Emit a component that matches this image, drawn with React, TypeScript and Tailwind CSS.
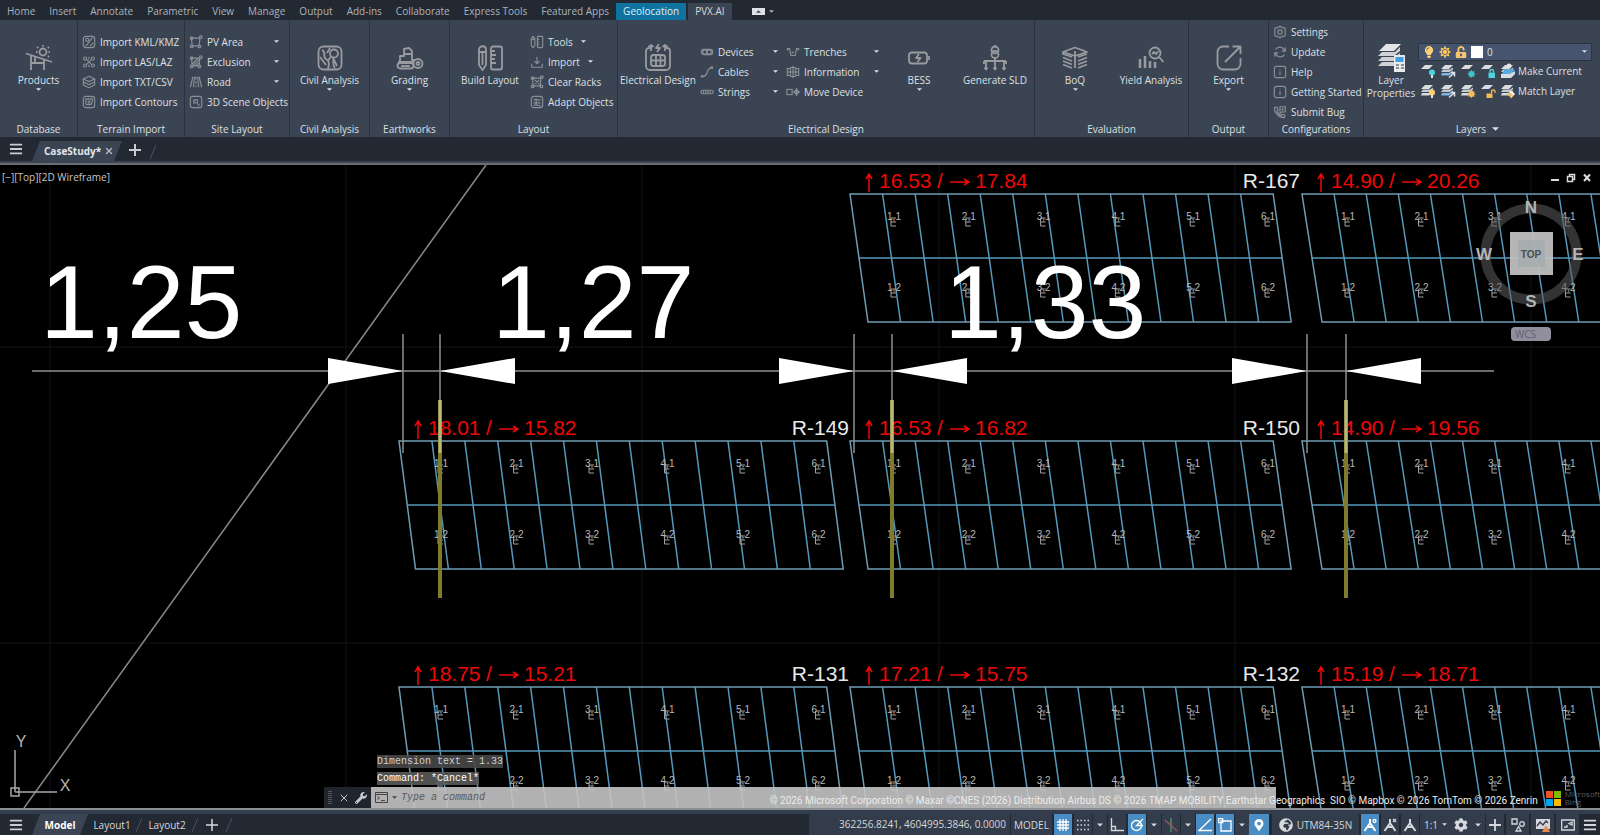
import React from 'react';
import { FaBars, FaCog, FaGlobeAfrica, FaLightbulb, FaMapMarkerAlt, FaSun, FaUnlockAlt, FaWrench } from 'react-icons/fa';
import { FiX } from 'react-icons/fi';

/* ---------- data ---------- */

const menuTabs = [
  'Home', 'Insert', 'Annotate', 'Parametric', 'View', 'Manage', 'Output', 'Add-ins',
  'Collaborate', 'Express Tools', 'Featured Apps', 'Geolocation', 'PVX.AI',
];

// small line icons, 16 x 16
const smallIcons: Record<string, React.ReactNode> = {
  kml: <><rect x="1.5" y="1.5" width="13" height="13" rx="3" /><path d="M4 13 12 3M9 13l4-4" /><circle cx="6" cy="5.500" r="1.800" /></>,
  las: <><circle cx="3.500" cy="4" r="1.700" /><circle cx="12.500" cy="4" r="1.700" /><circle cx="3.500" cy="12" r="1.700" /><circle cx="12.500" cy="12" r="1.700" /><path d="M5 5l6 6M11 5l-6 6M8 2v3M8 11v3" /></>,
  txt: <><path d="M8 1.500 14.500 4.500 8 7.500 1.500 4.500z" /><path d="M1.500 4.500v7L8 14.500l6.500-3v-7M1.500 8 8 11l6.500-3" /></>,
  contours: <><rect x="1.500" y="1.500" width="13" height="13" rx="3" /><path d="M5 4.500h6c1.500 0 1.500 2 .5 3s.5 3.500-2 3.500H6c-2 0-2-2-1.500-3.500S3.500 4.500 5 4.500z" /><path d="M6.500 7h3M6.500 9h3" /></>,
  area: <><path d="M3 3.500h9.500l-1 9H3.500z" /><circle cx="3" cy="3.500" r="1.500" /><circle cx="13.500" cy="2.500" r="1.500" /><circle cx="3" cy="13" r="1.500" /><circle cx="12" cy="13" r="1.500" /></>,
  exclusion: <><path d="M3 3.500h9.500l-1 9H3.500zM4 10l6-6M5 12l7-7M8 12l3-3" /><circle cx="3" cy="3.500" r="1.500" /><circle cx="13.500" cy="2.500" r="1.500" /><circle cx="3" cy="13" r="1.500" /><circle cx="12" cy="13" r="1.500" /></>,
  road: <path d="M4.500 2 1.500 14M11.500 2l3 12M6.500 2 5 14M8 2v3M8 7v3M8 12v2M10 2l1 12" />,
  scene: <><rect x="1.500" y="1.500" width="13" height="13" rx="2.500" /><path d="M5.500 5.500h4v4M5.500 5.500v3.500h3M9.500 9.500l2.500 3" /></>,
  tools: <><path d="M1.500 4 3.500 1.500 5.500 4v8l-2 2.500-2-2.500zM1.500 5h4" /><rect x="8.500" y="1.500" width="6" height="13" rx="1" /><path d="M8.500 5h2M8.500 8h2M8.500 11h2" /></>,
  import: <path d="M8 2v8M5 7l3 3 3-3M2 10v4h12v-4" />,
  clear: <><path d="M3 3.500h9.500l-1 9H3.500zM5.500 5.500l5 5M10.500 5.500l-5 5" /><circle cx="3" cy="3.500" r="1.500" /><circle cx="13.500" cy="2.500" r="1.500" /><circle cx="3" cy="13" r="1.500" /><circle cx="13" cy="13" r="1.500" /></>,
  adapt: <><rect x="1.500" y="1.500" width="13" height="13" rx="3" /><path d="M4 6c2-3 6 2 8-1M4 9h8M4 12c2-2 6 1 8 0M7 4v8" /></>,
  devices: <><rect x="1.500" y="5" width="13" height="6" rx="3" /><circle cx="5.500" cy="8" r="2.500" /><circle cx="10.500" cy="8" r="2.500" /></>,
  cables: <><path d="M3 13c7 1 3-9 10-10" /><circle cx="2.500" cy="13" r="1" /><circle cx="13.500" cy="3" r="1" /></>,
  strings: <><rect x="1" y="6" width="14" height="4" rx="2" /><path d="M4 6.500v3M6.500 6.500v3M9 6.500v3M11.500 6.500v3" /></>,
  trenches: <path d="M1 4h3l1.500 8h5L12 4h3M6.500 9.500 9 7.500M1 6l2-1M13 6l2-1" />,
  information: <path d="M8 2v12M8 2 4 4H1.500v8H4l4 2M8 2l4 2h2.500v8H12l-4 2M1.500 8h13M5 4v8M11 4v8" />,
  move: <><rect x="1" y="5" width="6" height="6" /><path d="M12 5l3 3-3 3-3-3zM12 3.500v9M8 8h8" /></>,
  settings: <><path d="M8 1.200 10.500 3l3.200.5L14 8l-.3 4.500-3.200.5L8 14.800 5.500 13l-3.200-.5L2 8l.3-4.500L5.500 3z" /><circle cx="8" cy="8" r="2.500" /></>,
  update: <path d="M13.500 7A5.800 5.800 0 0 0 3 5M2.500 9A5.800 5.800 0 0 0 13 11M14 2.500V7h-4M2 13.500V9h4" />,
  info: <><rect x="1.500" y="1.500" width="13" height="13" rx="2.500" /><path d="M8 7v4.500M8 4.500v1" /></>,
  bug: <><path d="M1.500 3c0 6 5 11.500 11.500 11.500l.5-3-3-1-1 1.500C7 11 5 9 4.500 7L6 6 4.500 2.500z" /><path d="M8 2h6v6H9.500L8 9.500zM10 4.500h2M10 6.500l2-2" /></>,
};

// large ribbon icons, 28 x 28
const bigIcons: Record<string, React.ReactNode> = {
  products: <><path d="M1 9.500 27 18M6 12v14M6 19h13M19 16v10M10 13v6" /><circle cx="18" cy="8" r="3.500" /><path d="M18 1v1.500M12 3l1.200 1.200M24 3l-1.200 1.200M11 8h1.500M23.500 8H25M23 12l1 1" /></>,
  civil: <><rect x="2.500" y="2.500" width="23" height="23" rx="5" /><path d="M6 6c5 2 0 7 4 9s3 6 2 10M4 13l6 8M14 4l-3 5M17 14l4 8M17 14c1 4-1 7 2 10" /><circle cx="18" cy="9.500" r="4" /><path d="m15 12.500-3 4" /></>,
  grading: <><path d="M4 18V12h4V5l5-1 3 3v9h3M8 10h7M2 18h15" /><rect x="1.500" y="19" width="16" height="5.500" rx="2.700" /><circle cx="22" cy="19.500" r="4.500" /><circle cx="22" cy="19.500" r="1.500" /><path d="M5 22h9" /></>,
  build: <><path d="M3 6c0-5 7-5 7 0v15l-3.500 5L3 21zM3 8h7M6.500 8v13" /><rect x="15" y="2.500" width="11" height="23" rx="2" /><path d="M15 7h4M15 11h5M15 15h4M15 19h5" /></>,
  electrical: <><path d="M6 4H5a3 3 0 0 0-3 3v15a4 4 0 0 0 4 4h16a4 4 0 0 0 4-4V7a3 3 0 0 0-3-3h-1M7 1v6M21 1v6M4.500 3 7 1l2.500 2M18.500 3 21 1l2.500 2" /><path d="m15 0-3 4h4l-3 4" /><rect x="7" y="11" width="14" height="11" rx="2.500" /><path d="M7 16.500h14M12 11v11M16.500 11v11" /></>,
  bess: <><rect x="4" y="8.500" width="18" height="11" rx="3" /><path d="M24 12v4M14 10l-3 4h4.500l-3 4" /></>,
  sld: <><path d="M14 1v2M14 13v4M3 17h22M5 17v8M14 17v8M23 17v8M3 17v3M25 17v3M3.500 23.500 5 25.500l1.500-2M12.500 23.500l1.500 2 1.500-2M21.500 23.500l1.500 2 1.500-2" /><circle cx="14" cy="6" r="3.500" /><circle cx="14" cy="10.500" r="3.500" /></>,
  boq: <path d="M2 8 14 3.500 26 8l-12 4zM2 8v2l9 3M26 10l-9 3M2 13.500l9 3.500M26 13.500 17 17M2 17l9 3.500M26 17l-9 3.500M2 20.500l9 3.500M26 20.500 17 24M14 7v17" />,
  yield: <><path d="M3 15v9M8 12v12M13 17v7M18 18v6" strokeWidth="2.500" /><circle cx="18" cy="9" r="5.500" /><path d="m22 13 4.500 5M15 10l2-2 2 2 2.500-3" /></>,
  export: <path d="M14 2.500H8A5.500 5.500 0 0 0 2.500 8v12A5.500 5.500 0 0 0 8 25.500h12a5.500 5.500 0 0 0 5.500-5.500v-6M10 18 25 3M17.500 2.500H25.500V10" />,
};

const rackRows = [
  { top: 194, racks: [null, { up: '16.53', side: '17.84', tag: 'R-167' }, { up: '14.90', side: '20.26', tag: '' }] },
  { top: 441, racks: [{ up: '18.01', side: '15.82', tag: 'R-149' }, { up: '16.53', side: '16.82', tag: 'R-150' }, { up: '14.90', side: '19.56', tag: '' }] },
  { top: 687, racks: [{ up: '18.75', side: '15.21', tag: 'R-131' }, { up: '17.21', side: '15.75', tag: 'R-132' }, { up: '15.19', side: '18.71', tag: '' }] },
];

const rackColumns = [
  { x: 399, cell: 32.9, skew: 16.500, label: 440, pitch: 75.500, count: 6 },
  { x: 850, cell: 32.55, skew: 18, label: 893, pitch: 74.800, count: 6 },
  { x: 1302, cell: 32.1, skew: 20, label: 1347, pitch: 73.500, count: 4 },
];

const dimensions = [
  { text: '1,25', textX: 40, a: 403, b: 440 },
  { text: '1,27', textX: 492, a: 854, b: 892 },
  { text: '1,33', textX: 944, a: 1307, b: 1346 },
];

/* ---------- small parts ---------- */

const Caret: React.FC<{ className?: string }> = ({ className = '' }) => (
  <svg className={`shrink-0 ${className}`} width="5" height="3" viewBox="0 0 8 4" aria-hidden="true">
    <path d="M0 0h8L4 4z" fill="currentColor" />
  </svg>
);

const SmallButton: React.FC<{ icon: string; label: string; caret?: 'end' | 'inline' }> = ({ icon, label, caret }) => (
  <button type="button" className="flex h-5 w-full items-center gap-1 whitespace-nowrap">
    <svg className="h-3.5 w-3.5 shrink-0 text-[#8b9097]" viewBox="0 0 16 16" fill="none" stroke="currentColor" strokeWidth="1.3">
      {smallIcons[icon]}
    </svg>
    <span>{label}</span>
    {caret && <Caret className={caret === 'end' ? 'ml-auto' : 'ml-1'} />}
  </button>
);

const BigButton: React.FC<{ icon: string; label: string; caret?: boolean; className?: string }> = ({ icon, label, caret, className = '' }) => (
  <button type="button" className={`flex shrink-0 flex-col items-center whitespace-nowrap ${className}`}>
    <svg className="h-7 w-7 text-[#999b9f]" viewBox="0 0 28 28" fill="none" stroke="currentColor" strokeWidth="1.8" strokeLinejoin="round">
      {bigIcons[icon]}
    </svg>
    <span className="h-4 leading-4">{label}</span>
    <span className="flex h-3 justify-center">{caret && <Caret />}</span>
  </button>
);

const Group: React.FC<{ title: string; className: string; caret?: boolean; children: React.ReactNode }> = ({ title, className, caret, children }) => (
  <section className={`flex shrink-0 flex-col border-r border-[#2a3240] ${className}`}>
    <div className="flex h-[103px] items-center">{children}</div>
    <h2 className="flex h-3 items-center justify-center gap-1.5 leading-3">
      {title}
      {caret && <svg width="7" height="4" viewBox="0 0 8 4"><path d="M0 0h8L4 4z" fill="currentColor" /></svg>}
    </h2>
  </section>
);

type Badge = 'bulb' | 'arrow' | 'snow' | 'lock' | 'sun' | 'unlock' | 'person' | 'brush';

const LayerGlyph: React.FC<{ stack?: boolean; color: string; badge: Badge }> = ({ stack, color, badge }) => (
  <svg className="h-4 w-4" viewBox="0 0 16 16">
    <path d="M5 2h8l-4 4H1z" fill="#dadde0" />
    {stack && (
      <>
        <path d="M3 6.500h7l3-2v2L9.500 9H1z" fill="#c5c9cd" />
        <path d="M2 10h7l4-2.500v2L9 12.500H1z" fill={badge === 'arrow' || badge === 'person' ? '#7fb6e0' : '#dadde0'} />
      </>
    )}
    {badge === 'bulb' && <><circle cx="12" cy="9.500" r="3" fill={color} /><path d="M11 12h2v3h-2z" fill="#dfe3e6" /></>}
    {badge === 'arrow' && <path d="m9 14.500 5-4.500M14.500 13.500V9.500H11" stroke={color} strokeWidth="1.500" fill="none" />}
    {(badge === 'snow' || badge === 'sun') && (
      <><circle cx="11.500" cy="11" r="3" fill={color} /><path d="M11.500 7v8M7.500 11h8M8.700 8.200l5.600 5.600M14.300 8.200l-5.600 5.600" stroke={color} strokeWidth=".8" /></>
    )}
    {badge === 'lock' && <><path d="M8.500 9.500H15v5.500H8.500z" fill={color} /><path d="M10 9.500V8c0-2 3.500-2 3.500 0v1.500" stroke={color} strokeWidth="1.300" fill="none" /></>}
    {badge === 'unlock' && <><path d="M6.500 10.500h6V15h-6z" fill={color} /><path d="M11.500 10.500V8.500c0-2 3.500-2 3.500 0V10" stroke={color} strokeWidth="1.300" fill="none" /></>}
    {badge === 'person' && <><circle cx="9" cy="3" r="2.500" fill="#e4e6e8" /><path d="M5 6h8l2 1-5 4H2z" fill={color} /><path d="M1 11h9l5-3v3l-4 4H1z" fill="#dadde0" /></>}
    {badge === 'brush' && <><path d="m7 10 3-1 4 3.500-3 3z" fill={color} /><path d="m9.500 9 1.500-1.500 4 3.500-1.500 1.500z" fill="#fff" /></>}
  </svg>
);

const MenuBars: React.FC<{ label: string }> = ({ label }) => (
  <button type="button" aria-label={label} className="flex w-8 shrink-0 items-center justify-center text-[#c9ccd1]">
    <FaBars className="h-3.5 w-3.5" />
  </button>
);

/* ---------- ribbon ---------- */

const MenuBar: React.FC = () => (
  <nav className="flex h-5 shrink-0 items-end bg-[#222933] text-[#aeb3ba]">
    {menuTabs.map((tab) => (
      <button
        key={tab}
        type="button"
        className={`h-[17px] whitespace-nowrap px-[7px] leading-[17px] ${
          tab === 'Geolocation' ? 'mr-0.5 bg-[#0e739f] text-[#e1edf3]' : tab === 'PVX.AI' ? 'bg-[#3b4453] text-[#d5d9de]' : ''
        }`}
      >
        {tab}
      </button>
    ))}
    <button type="button" aria-label="Ribbon display" className="ml-5 flex h-[17px] items-center gap-1">
      <span className="flex h-[7px] w-[13px] items-center justify-center bg-[#dfe1e4] text-[#444b55]">
        <svg width="5" height="3" viewBox="0 0 8 4"><path d="M0 4h8L4 0z" fill="currentColor" /></svg>
      </span>
      <Caret />
    </button>
  </nav>
);

const LayerControls: React.FC = () => (
  <div className="flex flex-col">
    <label className="flex h-[18px] w-[174px] items-center gap-1 border border-[#2c3442] bg-[#465470] pl-1">
      <FaLightbulb className="h-3 w-3 text-[#ffd070]" />
      <FaSun className="h-3 w-3 text-[#fdc65c]" />
      <FaUnlockAlt className="h-3 w-3 text-[#f7c56b]" />
      <span className="h-3 w-3 bg-white" />
      <select aria-label="Layer" className="min-w-0 flex-1 appearance-none bg-transparent text-[10px] leading-4 text-[#dfe3e8] outline-none">
        <option>0</option>
      </select>
      <Caret className="mr-1" />
    </label>
    <div className="flex h-5 items-center gap-1 pl-0.5">
      <LayerGlyph color="#4fd3dc" badge="bulb" />
      <LayerGlyph stack color="#dfe3e6" badge="arrow" />
      <LayerGlyph color="#3fc1c9" badge="snow" />
      <LayerGlyph color="#4fd3dc" badge="lock" />
      <button type="button" className="flex items-center gap-0.5 whitespace-nowrap">
        <LayerGlyph stack color="#58a9e0" badge="person" />
        Make Current
      </button>
    </div>
    <div className="flex h-5 items-center gap-1 pl-0.5">
      <LayerGlyph stack color="#ffd070" badge="bulb" />
      <LayerGlyph stack color="#dfe3e6" badge="arrow" />
      <LayerGlyph stack color="#f5bd55" badge="sun" />
      <LayerGlyph color="#f5bd55" badge="unlock" />
      <button type="button" className="flex items-center gap-0.5 whitespace-nowrap">
        <LayerGlyph stack color="#f0bf6a" badge="brush" />
        Match Layer
      </button>
    </div>
  </div>
);

const Ribbon: React.FC = () => (
  <div className="flex h-[117px] shrink-0 overflow-hidden bg-[#3b4453] text-[#dde0e4]">
    <Group title="Database" className="w-[78px]">
      <BigButton icon="products" label="Products" caret className="w-full" />
    </Group>
    <Group title="Terrain Import" className="w-[107px]">
      <div className="min-w-0 flex-1 pl-1">
        <SmallButton icon="kml" label="Import KML/KMZ" />
        <SmallButton icon="las" label="Import LAS/LAZ" />
        <SmallButton icon="txt" label="Import TXT/CSV" />
        <SmallButton icon="contours" label="Import Contours" />
      </div>
    </Group>
    <Group title="Site Layout" className="w-[105px]">
      <div className="min-w-0 flex-1 pl-1 pr-2.5">
        <SmallButton icon="area" label="PV Area" caret="end" />
        <SmallButton icon="exclusion" label="Exclusion" caret="end" />
        <SmallButton icon="road" label="Road" caret="end" />
        <SmallButton icon="scene" label="3D Scene Objects" />
      </div>
    </Group>
    <Group title="Civil Analysis" className="w-20">
      <BigButton icon="civil" label="Civil Analysis" caret className="w-full" />
    </Group>
    <Group title="Earthworks" className="w-20">
      <BigButton icon="grading" label="Grading" caret className="w-full" />
    </Group>
    <Group title="Layout" className="w-[168px]">
      <BigButton icon="build" label="Build Layout" className="w-20" />
      <div className="flex-1">
        <SmallButton icon="tools" label="Tools" caret="inline" />
        <SmallButton icon="import" label="Import" caret="inline" />
        <SmallButton icon="clear" label="Clear Racks" />
        <SmallButton icon="adapt" label="Adapt Objects" />
      </div>
    </Group>
    <Group title="Electrical Design" className="w-[417px]">
      <BigButton icon="electrical" label="Electrical Design" className="w-20" />
      <div className="w-20 pl-0.5">
        <SmallButton icon="devices" label="Devices" caret="end" />
        <SmallButton icon="cables" label="Cables" caret="end" />
        <SmallButton icon="strings" label="Strings" caret="end" />
      </div>
      <div className="w-[101px] pl-2">
        <SmallButton icon="trenches" label="Trenches" caret="end" />
        <SmallButton icon="information" label="Information" caret="end" />
        <SmallButton icon="move" label="Move Device" />
      </div>
      <BigButton icon="bess" label="BESS" caret className="w-20" />
      <BigButton icon="sld" label="Generate SLD" className="w-[72px]" />
    </Group>
    <Group title="Evaluation" className="w-[154px]">
      <BigButton icon="boq" label="BoQ" caret className="w-20" />
      <BigButton icon="yield" label="Yield Analysis" className="w-[72px]" />
    </Group>
    <Group title="Output" className="w-20">
      <BigButton icon="export" label="Export" caret className="w-full" />
    </Group>
    <Group title="Configurations" className="w-[95px]">
      <div className="min-w-0 flex-1 pl-1">
        <SmallButton icon="settings" label="Settings" />
        <SmallButton icon="update" label="Update" />
        <SmallButton icon="info" label="Help" />
        <SmallButton icon="info" label="Getting Started" />
        <SmallButton icon="bug" label="Submit Bug" />
      </div>
    </Group>
    <Group title="Layers" caret className="w-[228px] border-transparent">
      <button type="button" className="flex w-[54px] shrink-0 flex-col items-center leading-[13px]">
        <svg className="h-7 w-7" viewBox="0 0 28 28">
          <path d="M9 0h15l-7 7H2z" fill="#e3e5e7" />
          <path d="M5 8h13l5-5v4l-6 5H1zM5 13h13l5-4v4l-6 4H1zM5 18h12v4H1z" fill="#cfd2d5" />
          <path d="M17 11h11v17H17z" fill="#e8eaec" />
          <path d="M18.500 13h8v5h-8z" fill="#3f9fe0" />
          <path d="M19 21h3M19 24h3M24 21h3M24 24h3" stroke="#6b7280" strokeWidth="1.500" />
        </svg>
        <span className="mt-0.5">Layer Properties</span>
      </button>
      <LayerControls />
    </Group>
  </div>
);

const FileTabs: React.FC = () => (
  <div className="flex h-6 shrink-0 bg-[#222933]">
    <MenuBars label="File menu" />
    <div className="mt-1 flex w-[90px] items-center justify-between bg-[#3b4453] pl-3 pr-2 font-bold text-[#e4e6e9] [clip-path:polygon(8px_0,100%_0,calc(100%-8px)_100%,0_100%)]">
      CaseStudy*
      <button type="button" aria-label="Close drawing"><FiX className="h-2.5 w-2.5 text-[#b9bdc3]" strokeWidth={3} /></button>
    </div>
    <button type="button" aria-label="New drawing" className="ml-1.5 mt-0.5 text-[#c9ccd1]">
      <svg width="14" height="14" viewBox="0 0 14 14"><path d="M7 1v12M1 7h12" stroke="currentColor" strokeWidth="2" /></svg>
    </button>
    <svg className="ml-2 mt-1.5 self-center" width="6" height="14" viewBox="0 0 6 14"><path d="M0 14 6 0" stroke="#4a5362" /></svg>
  </div>
);

/* ---------- drawing ---------- */

const Rack: React.FC<{ col: (typeof rackColumns)[number]; top: number; up: string; side: string; tag: string }> = ({ col, top, up, side, tag }) => {
  const { x, cell, skew } = col;
  const w = cell * 13;
  const labels = Array.from({ length: col.count }, (_, i) => i + 1);
  return (
    <g>
      <g stroke="#5699bb" strokeWidth="1.500" fill="none">
        {Array.from({ length: 12 }, (_, i) => (
          <path key={i} d={`M${x + cell * (i + 1)} ${top}l${skew} 128`} />
        ))}
        <path d={`M${x + skew / 2} ${top + 64}h${w}`} />
        <path d={`M${x} ${top}h${w}l${skew} 128h${-w}z`} stroke="#6d9db5" />
      </g>
      <g fill="#b9b9b9" fontSize="10" textAnchor="middle">
        {labels.map((n) =>
          [1, 2].map((m) => {
            const cx = col.label + col.pitch * (n - 1);
            const cy = top + (m === 1 ? 26 : 97);
            return (
              <g key={`${n}-${m}`}>
                <text x={cx + 1} y={cy}>{`${n},${m}`}</text>
                <path d={`M${cx + 3} ${cy - 2}h-5v8h5M${cx - 2} ${cy + 2}h5`} stroke="#a0a0a0" fill="none" />
              </g>
            );
          })
        )}
      </g>
      <g fill="#ee0808" stroke="none" fontSize="21">
        <path d={`M${x + 19} ${top - 2}v-17M${x + 16} ${top - 15}l3-5 3 5M${x + 100} ${top - 12}h19M${x + 114} ${top - 15}l5 3-5 3`} stroke="#ee0808" strokeWidth="1.500" fill="none" />
        <text x={x + 29} y={top - 6}>{up}</text>
        <text x={x + 87} y={top - 6}>/</text>
        <text x={x + 125} y={top - 6}>{side}</text>
      </g>
      {tag && <text x={x + 450} y={top - 6} fontSize="21" fill="#e8e8e8" textAnchor="end">{tag}</text>}
    </g>
  );
};

const Drawing: React.FC = () => (
  <svg className="absolute inset-0 h-full w-full" viewBox="0 165 1600 643" preserveAspectRatio="xMinYMin slice" fontFamily="'Liberation Sans', Arial, sans-serif">
    <path d="M50 165v643M346 165v643M642 165v643M939 165v643M1235 165v643M1531 165v643M0 347h1600M0 643h1600" stroke="#101219" fill="none" />
    <path d="M486 165 24 808" stroke="#8a8a8a" strokeWidth="1.500" />
    {rackRows.map((row) =>
      row.racks.map((rack, i) => rack && <Rack key={`${row.top}-${i}`} col={rackColumns[i]} top={row.top} {...rack} />)
    )}
    <path d="M32 371H1494" stroke="#6c6c6c" strokeWidth="2" />
    {dimensions.map((d) => (
      <g key={d.text}>
        <path d={`M${d.b} 400v198`} stroke="#7f7a2c" strokeWidth="4" />
        <path d={`M${d.b} 400v53`} stroke="#b9b67a" strokeWidth="3" />
        <path d={`M${d.a} 334v119M${d.b} 334v66`} stroke="#8f8f8f" strokeWidth="1.500" />
        <path d={`M${d.a} 371l-75-13v26zM${d.b} 371l75-13v26z`} fill="#fff" />
        <text x={d.textX} y="338" fontSize="104" fill="#fff">{d.text}</text>
      </g>
    ))}
    {/* UCS icon */}
    <path d="M15 792V750M15 792h42M11 788h8v8h-8z" stroke="#a9a9a9" strokeWidth="1.500" fill="none" />
    <g fontSize="16" fill="#b5b5b5" textAnchor="middle">
      <text x="21" y="747">Y</text>
      <text x="65" y="791">X</text>
    </g>
  </svg>
);

const ViewCube: React.FC = () => (
  <div className="absolute right-[10px] top-[30px] flex flex-col items-center">
    <svg width="118" height="122" viewBox="0 0 118 122" fontFamily="'Liberation Sans', Arial, sans-serif" fontWeight="bold">
      <circle cx="59" cy="59" r="45.500" fill="none" stroke="#5c5c5c" strokeOpacity=".55" strokeWidth="10" />
      <rect x="38" y="37" width="43" height="43" fill="#c4c4c4" fillOpacity=".92" />
      <rect x="46" y="45" width="27" height="27" fill="#a3a9ae" fillOpacity=".7" />
      <text x="59" y="63" fontSize="10" fill="#4b4e52" textAnchor="middle">TOP</text>
      <g fontSize="17" fill="#b5b5b5" textAnchor="middle">
        <text x="59" y="18">N</text>
        <text x="12" y="65">W</text>
        <text x="106" y="65">E</text>
        <text x="59" y="112">S</text>
      </g>
    </svg>
    <button type="button" className="mt-2.5 h-3.5 w-10 rounded-sm bg-[#918f9e] pl-1 text-left leading-3.5 text-[#5f5d69]">WCS</button>
  </div>
);

const CommandLine: React.FC = () => (
  <div className="absolute inset-x-[324px] bottom-0 font-['Liberation_Mono',monospace] text-[10px]">
    <div className="mb-0.5 ml-[53px] flex flex-col items-start gap-1 text-[#d0d0d0]">
      <p className="bg-[#484848]/90 leading-[13px]">Dimension text = 1.33</p>
      <p className="bg-[#5a5a5a]/90 leading-[13px] text-white">Command: *Cancel*</p>
    </div>
    <div className="flex h-[21px]">
      <div className="flex w-[47px] shrink-0 items-center justify-between bg-[#20242d] px-1 text-[#c4c7cb]">
        <svg width="4" height="14" viewBox="0 0 4 14"><path d="M1 0v14M3 0v14" stroke="#888" strokeDasharray="1 1" /></svg>
        <FiX className="h-3 w-3" />
        <FaWrench className="h-3 w-3" />
      </div>
      <label className="flex min-w-0 flex-1 items-center gap-1 bg-[#c4c4c4]/90 pl-1 text-[#444]">
        <svg width="13" height="11" viewBox="0 0 13 11" fill="none" stroke="currentColor">
          <path d="M.5.500h12v10H.5zM.5 2.500h12M2.500 4.500l2 1.500-2 1.500M6 8.500h4" />
        </svg>
        <Caret />
        <input aria-label="Command" placeholder="Type a command" className="min-w-0 flex-1 bg-transparent italic outline-none placeholder:text-[#5a5a5a]" />
      </label>
    </div>
  </div>
);

const Canvas: React.FC = () => (
  <main className="relative min-h-0 flex-1 overflow-hidden bg-black">
    <Drawing />
    <p className="absolute left-0.5 top-1 text-[#c8c8c8]">[−][Top][2D Wireframe]</p>
    <div className="absolute right-2 top-2 flex items-center gap-1.5 text-[#dcdcdc]">
      <button type="button" aria-label="Minimize"><svg width="10" height="10" viewBox="0 0 10 10"><path d="M1 7h8" stroke="currentColor" strokeWidth="2" /></svg></button>
      <button type="button" aria-label="Restore"><svg width="10" height="10" viewBox="0 0 10 10"><path d="M1.500 3.500h5v5h-5zM3.500 3V1.500h5v5H7" fill="none" stroke="currentColor" strokeWidth="1.500" /></svg></button>
      <button type="button" aria-label="Close"><svg width="10" height="10" viewBox="0 0 10 10"><path d="M2 1.500l6 6.500M8 1.500 2 8" stroke="currentColor" strokeWidth="2" /></svg></button>
    </div>
    <ViewCube />
    <CommandLine />
    <div className="absolute bottom-0 right-0 flex items-end whitespace-nowrap text-[#ececec]">
      <p className="font-['Roboto','Open_Sans',sans-serif] leading-[14px]">© 2026 Microsoft Corporation © Maxar ©CNES (2026) Distribution Airbus DS © 2026 TMAP MOBILITY Earthstar Geographics&nbsp; SIO © Mapbox © 2026 TomTom © 2026 Zenrin</p>
      <svg className="mb-0.5 ml-2" width="15" height="15" viewBox="0 0 16 16">
        <path d="M0 0h7.500v7.500H0z" fill="#f25022" />
        <path d="M8.500 0H16v7.500H8.500z" fill="#7fba00" />
        <path d="M0 8.500h7.500V16H0z" fill="#00a4ef" />
        <path d="M8.500 8.500H16V16H8.500z" fill="#ffb900" />
      </svg>
      <p className="mb-0.5 ml-1 text-[8px] leading-2 text-[#5d5d5d]">Microsoft<br />Bing</p>
    </div>
  </main>
);

/* ---------- status bar ---------- */

const StatusIcon: React.FC<{ label: string; active?: boolean; wide?: boolean; children: React.ReactNode }> = ({ label, active, wide, children }) => (
  <button
    type="button"
    aria-label={label}
    className={`flex h-full items-center justify-center border-x border-[#222933] ${wide ? 'w-[25px]' : 'w-5'} ${active ? 'bg-[#4a8cc4] text-white' : 'bg-[#333c4a]'}`}
  >
    <svg width="14" height="14" viewBox="0 0 14 14" fill="none" stroke="currentColor" strokeWidth="1.300">{children}</svg>
  </button>
);

const StatusCaret: React.FC = () => (
  <button type="button" aria-label="Options" className="flex w-3.5 items-center justify-center bg-[#333c4a]">
    <svg width="6" height="4" viewBox="0 0 8 4"><path d="M0 0h8L4 4z" fill="currentColor" /></svg>
  </button>
);

const Slash: React.FC = () => (
  <svg className="self-center" width="6" height="14" viewBox="0 0 6 14"><path d="M0 14 6 0" stroke="#4a5362" /></svg>
);

const person = <path d="M7 1v5M7 5 1.500 13M7 5l5.500 8M4.500 9h5" strokeWidth="2" />;

const StatusBar: React.FC = () => (
  <footer className="flex h-[21px] shrink-0 bg-[#222933] leading-5 text-[#d5d8dc]">
    <MenuBars label="Layout menu" />
    <button type="button" className="w-14 bg-[#3b4453] font-bold text-white [clip-path:polygon(8px_0,100%_0,calc(100%-8px)_100%,0_100%)]">Model</button>
    <button type="button" className="w-12">Layout1</button>
    <Slash />
    <button type="button" className="w-[50px]">Layout2</button>
    <Slash />
    <button type="button" aria-label="New layout" className="mx-2">
      <svg width="12" height="12" viewBox="0 0 12 12"><path d="M6 0v12M0 6h12" stroke="currentColor" strokeWidth="1.500" /></svg>
    </button>
    <Slash />
    <div className="ml-auto flex shrink-0 items-stretch">
      <p className="w-[201px] bg-[#333c4a] pr-1 text-right">362256.8241, 4604995.3846, 0.0000</p>
      <button type="button" className="w-[43px] border-x border-[#222933] bg-[#333c4a]">MODEL</button>
      <StatusIcon label="Grid" active><path d="M4 1v12M7 1v12M10 1v12M1 4h12M1 7h12M1 10h12" /></StatusIcon>
      <StatusIcon label="Snap"><path d="M1 2.500h12M1 7h12M1 11.500h12" strokeDasharray="1.500 2" strokeWidth="1.500" /></StatusIcon>
      <StatusCaret />
      <StatusIcon label="Ortho"><path d="M1.500 0v12.500H14M1.500 8.500h4v4" /></StatusIcon>
      <StatusIcon label="Polar tracking" active><circle cx="6.500" cy="7.500" r="5" /><path d="M13 1 6.500 7.500H13" /></StatusIcon>
      <StatusCaret />
      <StatusIcon label="Isometric drafting"><path d="M7 0v14" stroke="#4e9c68" /><path d="m1 2 12 11" stroke="#a05360" /></StatusIcon>
      <StatusCaret />
      <StatusIcon label="Snap tracking" active><path d="M13 1 1 12.500h13" /></StatusIcon>
      <StatusIcon label="Object snap" active><path d="M3 3h10v10H3zM.700.700h4v4h-4z" /></StatusIcon>
      <StatusCaret />
      <button type="button" aria-label="Map location" className="mr-0.5 flex w-5 items-center justify-center bg-[#4a8cc4] text-white"><FaMapMarkerAlt className="h-3 w-3" /></button>
      <button type="button" className="flex w-[89px] items-center justify-center gap-1 border-x border-[#222933] bg-[#333c4a]">
        <FaGlobeAfrica className="h-3.5 w-3.5" />
        UTM84-35N
      </button>
      <StatusIcon label="Annotation visibility" active>{person}<circle cx="11.500" cy="3" r="1.500" /></StatusIcon>
      <StatusIcon label="Auto scale">{person}<path d="m10 4 3-3M10 1l3 3" /></StatusIcon>
      <StatusIcon label="Annotation scale">{person}</StatusIcon>
      <button type="button" className="flex w-[31px] items-center justify-center gap-1 bg-[#333c4a]">1:1<Caret /></button>
      <button type="button" aria-label="Workspace" className="flex w-5 items-center justify-center bg-[#333c4a]"><FaCog className="h-3.5 w-3.5" /></button>
      <StatusCaret />
      <StatusIcon label="Annotation monitor"><path d="M7 1v12M1 7h12" strokeWidth="1.800" /></StatusIcon>
      <StatusIcon label="Isolate objects" wide><path d="M1 1h5v5H1zM5 13l2.500-4.500L10 13z" /><circle cx="11" cy="6" r="2.300" /></StatusIcon>
      <StatusIcon label="Hardware" wide><path d="M0 1h14v10H0z" fill="#d3d6da" stroke="none" /><path d="m1 8 3-4 3 3 3-4 2 2" stroke="#333c4a" /><path d="m10 7 4 7H6z" fill="#e58a55" stroke="none" /></StatusIcon>
      <StatusIcon label="Clean screen" wide><path d="M.700 2h12.600v10H.700zM8 5.500 11 4v3zM3 9h3v-2" /></StatusIcon>
      <button type="button" aria-label="Customize" className="flex w-5 items-center justify-center"><FaBars className="h-3.5 w-3.5" /></button>
    </div>
  </footer>
);

const App: React.FC = () => (
  <div className="flex h-screen flex-col overflow-hidden bg-[#222933] font-['Open_Sans','Noto_Sans',sans-serif] text-[10px] leading-4">
    <MenuBar />
    <Ribbon />
    <FileTabs />
    <div className="h-1 shrink-0 border-b-2 border-[#6a6e74] bg-[#3b4453]" />
    <Canvas />
    <div className="h-1.5 shrink-0 border-t-2 border-[#8b8e93] bg-[#333d4d]" />
    <StatusBar />
  </div>
);

export default App;
